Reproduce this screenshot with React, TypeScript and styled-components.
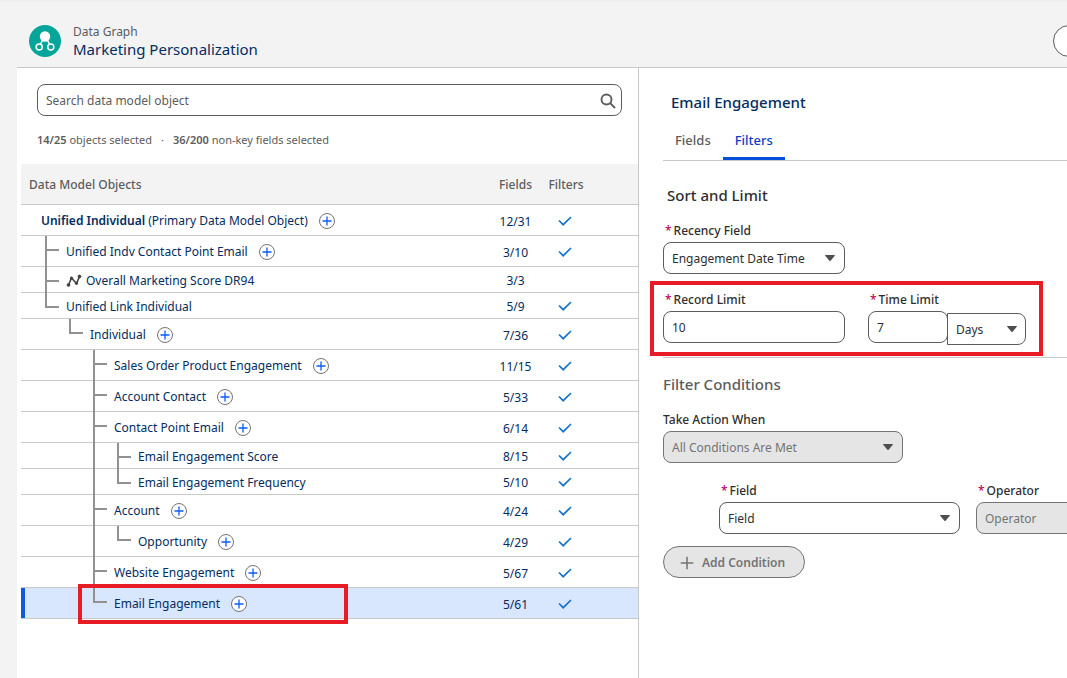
import React, { useState } from "react";
import styled, { createGlobalStyle, css } from "styled-components";

const color = {
  page: "#f3f3f3",
  line: "#c9c9c9",
  text: "#2e2e2e",
  muted: "#5c5c5c",
  navy: "#032d60",
  brand: "#0250d9",
  disabled: "#e5e5e5",
  mark: "#e81c24",
};

const GlobalStyle = createGlobalStyle`
  *, *::before, *::after { box-sizing: border-box; }
  html, body { height: 100%; }
  body {
    margin: 0;
    overflow: hidden;
    background: ${color.page};
    color: ${color.text};
    font: 12px/16px "Noto Sans", "Open Sans", sans-serif;
  }
  #root { height: 100%; }
  h1, h2, h3, p { margin: 0; }
  button, input, select { font: inherit; color: inherit; margin: 0; }
`;

const Shell = styled.div`
  min-height: 100%;
  display: flex;
  flex-direction: column;
  padding-left: 17px;
  box-shadow: inset 0 2px 0 #eeeeee;
`;

const Header = styled.header`
  display: flex;
  align-items: center;
  gap: 12px;
  padding: 23px 0 8px 12px;
  border-bottom: 1px solid ${color.line};
  overflow: hidden;
`;

const Heading = styled.div`
  flex: 1;
  padding-bottom: 2px;
`;

const Eyebrow = styled.p`
  font-size: 12px;
  line-height: 18px;
  color: ${color.muted};
`;

const PageTitle = styled.h1`
  font-size: 15px;
  line-height: 16px;
  font-weight: 400;
  color: ${color.navy};
`;

const HeaderButton = styled.button`
  flex: none;
  width: 80px;
  height: 32px;
  margin-right: -66px;
  border: 1px solid ${color.muted};
  border-radius: 16px;
  background: #fff;
`;

const Columns = styled.main`
  flex: 1;
  display: grid;
  grid-template-columns: minmax(0, 622fr) minmax(0, 428fr);
  background: #fff;
`;

const ObjectsPanel = styled.section`
  padding-top: 16px;
  border-right: 1px solid ${color.line};
`;

const SearchBox = styled.label`
  display: flex;
  align-items: center;
  height: 32px;
  margin: 0 16px 0 20px;
  padding: 1px 5px 0 8px;
  border: 1px solid ${color.muted};
  border-radius: 8px;
`;

const SearchInput = styled.input`
  flex: 1;
  min-width: 0;
  padding: 0;
  border: 0;
  outline: 0;
  background: none;
  &::placeholder { color: ${color.muted}; opacity: 1; }
`;

const Stats = styled.p`
  display: flex;
  gap: 9px;
  margin: 14px 20px;
  font-size: 11px;
  line-height: 20px;
  color: ${color.muted};
  b { font-weight: 600; }
`;

const Table = styled.table`
  width: calc(100% - 4px);
  margin-left: 4px;
  border-spacing: 0;
  table-layout: fixed;
`;

const HeadCell = styled.th<{ $kind: "name" | "fields" | "filters" }>`
  height: 41px;
  padding: 2px 0 0;
  border-bottom: 1px solid ${color.line};
  background: ${color.page};
  color: ${color.muted};
  font-weight: 500;
  text-align: center;
  ${(p) => p.$kind === "name" && css`padding-left: 8px; text-align: left;`}
  ${(p) => p.$kind === "fields" && css`width: 51px;`}
  ${(p) => p.$kind === "filters" && css`width: 97px; padding-right: 47px;`}
`;

const Row = styled.tr<{ $active?: boolean }>`
  color: ${color.navy};
  background: ${(p) => (p.$active ? "#d8e6fe" : "#fff")};
  & > td { border-bottom: 1px solid ${color.line}; padding: 0; }
  & > td:first-child { box-shadow: ${(p) => (p.$active ? "inset 4px 0 0 #0b5cdc" : "none")}; }
`;

const NumberCell = styled.td`
  text-align: center;
  && { padding-top: 3px; }
`;

const CheckCell = styled.td`
  line-height: 0;
  text-align: center;
  && { padding: 1px 49px 0 0; }
`;

const NameCell = styled.div<{ $tall: boolean; $root: boolean }>`
  position: relative;
  display: flex;
  align-items: stretch;
  height: ${(p) => (p.$tall ? 30 : 25)}px;
  padding-left: ${(p) => (p.$root ? 20 : 24)}px;
  white-space: nowrap;
`;

const NameLine = styled.div`
  display: flex;
  align-items: center;
  padding-top: 2px;
`;

type GuideKind = "none" | "pass" | "tee" | "end";

const Guide = styled.span<{ $kind: GuideKind; $last: boolean }>`
  position: relative;
  flex: none;
  width: ${(p) => (p.$last ? 21 : 24)}px;
  &::before {
    content: "";
    position: absolute;
    left: 0;
    top: 0;
    display: ${(p) => (p.$kind === "none" ? "none" : "block")};
    width: 2px;
    ${(p) => (p.$kind === "end" ? "height: 15px" : "bottom: -1px")};
    background: #919191;
  }
  &::after {
    content: "";
    position: absolute;
    left: 0;
    top: 13px;
    display: ${(p) => (p.$kind === "tee" || p.$kind === "end" ? "block" : "none")};
    width: 14px;
    height: 2px;
    background: #919191;
  }
`;

const ObjectName = styled.span`
  line-height: 18px;
  b { font-weight: 600; }
`;

const MetricIcon = styled.svg`
  flex: none;
  margin-right: 4px;
`;

const AddButton = styled.button`
  flex: none;
  display: grid;
  place-items: center;
  width: 16px;
  height: 16px;
  margin-left: 11px;
  padding: 0;
  border: 1px solid #747474;
  border-radius: 50%;
  background: #fff;
`;

const Callout = styled.span<{ $top: number; $left: number; $width: number; $height: number }>`
  position: absolute;
  z-index: 1;
  top: ${(p) => p.$top}px;
  left: ${(p) => p.$left}px;
  width: ${(p) => p.$width}px;
  height: ${(p) => p.$height}px;
  border: 4px solid ${color.mark};
  pointer-events: none;
`;

const DetailPanel = styled.section`
  padding: 24px 0 0 24px;
  overflow: hidden;
`;

const DetailTitle = styled.h2`
  padding-left: 8px;
  font-size: 15px;
  line-height: 20px;
  font-weight: 500;
  color: ${color.navy};
`;

const Tabs = styled.div`
  display: flex;
  margin-top: 18px;
  border-bottom: 1px solid ${color.line};
`;

const Tab = styled.button<{ $active: boolean }>`
  height: 30px;
  padding: 0 12px 8px;
  border: 0;
  border-bottom: 3px solid ${(p) => (p.$active ? color.brand : "transparent")};
  background: none;
  font-size: 13px;
  line-height: 18px;
  font-weight: 500;
  color: ${(p) => (p.$active ? "#0b3fc4" : color.muted)};
`;

const SectionTitle = styled.h3<{ $muted?: boolean }>`
  margin-top: ${(p) => (p.$muted ? 16 : 24)}px;
  padding-left: ${(p) => (p.$muted ? 0 : 4)}px;
  font-size: 15px;
  line-height: 20px;
  font-weight: 500;
  color: ${(p) => (p.$muted ? color.muted : color.text)};
`;

const FieldRow = styled.div<{ $indent?: boolean; $gap?: number; $top: number }>`
  position: relative;
  display: flex;
  align-items: flex-start;
  gap: ${(p) => p.$gap ?? 0}px;
  margin-top: ${(p) => p.$top}px;
  padding-left: ${(p) => (p.$indent ? 56 : 0)}px;
`;

const Field = styled.div`
  flex: none;
  display: flex;
  flex-direction: column;
  gap: 2px;
`;

const Label = styled.label<{ $required?: boolean }>`
  line-height: 18px;
  font-weight: 500;
  ${(p) =>
    p.$required &&
    css`
      padding-left: 2px;
      &::before { content: "*"; margin-right: 2px; color: #ba0554; }
    `}
`;

const control = css`
  height: 32px;
  border: 1px solid ${color.muted};
  border-radius: 8px;
  background: #fff;
`;

const TextInput = styled.input<{ $width: number }>`
  ${control}
  width: ${(p) => p.$width}px;
  padding: 0 8px;
`;

const SelectBox = styled.span<{ $width: number; $joined?: boolean }>`
  display: grid;
  align-items: center;
  width: ${(p) => p.$width}px;
  ${(p) => p.$joined && css`margin: 2px 0 0 -1px;`}
  & > * { grid-area: 1 / 1; }
  & > svg { justify-self: end; margin-right: ${(p) => (p.$joined ? 8 : 9)}px; pointer-events: none; }
`;

const NativeSelect = styled.select<{ $joined?: boolean }>`
  ${control}
  appearance: none;
  width: 100%;
  padding: 2px 24px 0 8px;
  ${(p) => p.$joined && css`border-radius: 0 8px 8px 0;`}
  &:disabled {
    opacity: 1;
    background: ${color.disabled};
    border-color: #747474;
    color: #747474;
  }
`;

const Inline = styled.div`
  display: flex;
  align-items: flex-start;
`;

const Divider = styled.hr`
  height: 1px;
  margin: 12px 0 0;
  border: 0;
  background: ${color.line};
`;

const ConditionButton = styled.button`
  display: flex;
  align-items: center;
  gap: 8px;
  height: 32px;
  min-width: 142px;
  margin-top: 12px;
  padding: 2px 16px 0;
  border: 1px solid #747474;
  border-radius: 16px;
  background: ${color.disabled};
  color: #747474;
  font-weight: 600;
`;

interface DataObject {
  name: string;
  note?: string;
  fields: string;
  guides: GuideKind[];
  add?: boolean;
  metric?: boolean;
  filtered?: boolean;
}

const objects: DataObject[] = [
  { name: "Unified Individual", note: "(Primary Data Model Object)", fields: "12/31", guides: [], add: true, filtered: true },
  { name: "Unified Indv Contact Point Email", fields: "3/10", guides: ["tee"], add: true, filtered: true },
  { name: "Overall Marketing Score DR94", fields: "3/3", guides: ["tee"], metric: true },
  { name: "Unified Link Individual", fields: "5/9", guides: ["end"], filtered: true },
  { name: "Individual", fields: "7/36", guides: ["none", "end"], add: true, filtered: true },
  { name: "Sales Order Product Engagement", fields: "11/15", guides: ["none", "none", "tee"], add: true, filtered: true },
  { name: "Account Contact", fields: "5/33", guides: ["none", "none", "tee"], add: true, filtered: true },
  { name: "Contact Point Email", fields: "6/14", guides: ["none", "none", "tee"], add: true, filtered: true },
  { name: "Email Engagement Score", fields: "8/15", guides: ["none", "none", "pass", "tee"], filtered: true },
  { name: "Email Engagement Frequency", fields: "5/10", guides: ["none", "none", "pass", "end"], filtered: true },
  { name: "Account", fields: "4/24", guides: ["none", "none", "tee"], add: true, filtered: true },
  { name: "Opportunity", fields: "4/29", guides: ["none", "none", "pass", "end"], add: true, filtered: true },
  { name: "Website Engagement", fields: "5/67", guides: ["none", "none", "tee"], add: true, filtered: true },
  { name: "Email Engagement", fields: "5/61", guides: ["none", "none", "end"], add: true, filtered: true },
];

const GraphIcon = () => (
  <svg width="32" height="32" viewBox="0 0 32 32" aria-hidden="true">
    <circle cx="16" cy="16" r="16" fill="#06a59a" />
    <g fill="none" stroke="#fff" strokeWidth="1.5">
      <path d="M14 14.5 11.5 19M18 14.5 20.5 19" />
      <circle cx="10.2" cy="22" r="3" />
      <circle cx="21.8" cy="22" r="3" />
    </g>
    <circle cx="16" cy="11.5" r="5.2" fill="#fff" />
  </svg>
);

const SearchIcon = () => (
  <svg width="16" height="16" viewBox="0 0 16 16" fill="none" stroke="#5c5c5c" strokeWidth="1.9" aria-hidden="true">
    <circle cx="6.5" cy="6.5" r="5" />
    <path d="m10.2 10.2 4.8 4.8" />
  </svg>
);

const CheckIcon = () => (
  <svg width="14" height="12" viewBox="0 0 14 12" fill="none" stroke="#1675c8" strokeWidth="1.7" aria-hidden="true">
    <path d="M1 5.5 5.2 9.7 13 2" />
  </svg>
);

const PlusIcon = ({ size, stroke, weight }: { size: number; stroke: string; weight: number }) => (
  <svg width={size} height={size} viewBox="0 0 10 10" stroke={stroke} strokeWidth={weight} aria-hidden="true">
    <path d="M5 .5v9M.5 5h9" />
  </svg>
);

const Arrow = () => (
  <svg width="12" height="8" viewBox="0 0 12 8" fill="#514f4d" aria-hidden="true">
    <path d="M1.6 1h8.8q.9 0 .4.8L6.6 6.8q-.6.6-1.2 0L1.2 1.8Q.7 1 1.6 1Z" />
  </svg>
);

interface SelectProps {
  id: string;
  width: number;
  value: string;
  disabled?: boolean;
  joined?: boolean;
  label?: string;
}

const Select = ({ id, width, value, disabled, joined, label }: SelectProps) => (
  <SelectBox $width={width} $joined={joined}>
    <NativeSelect id={id} disabled={disabled} $joined={joined} aria-label={label}>
      <option>{value}</option>
    </NativeSelect>
    <Arrow />
  </SelectBox>
);

export default function App() {
  const [tab, setTab] = useState("Filters");
  const [selected, setSelected] = useState(objects.length - 1);

  return (
    <>
      <GlobalStyle />
      <Shell>
        <Header>
          <GraphIcon />
          <Heading>
            <Eyebrow>Data Graph</Eyebrow>
            <PageTitle>Marketing Personalization</PageTitle>
          </Heading>
          <HeaderButton type="button" aria-label="Cancel" />
        </Header>
        <Columns>
          <ObjectsPanel>
            <SearchBox>
              <SearchInput type="text" aria-label="Search data model object" placeholder="Search data model object" />
              <SearchIcon />
            </SearchBox>
            <Stats>
              <span><b>14/25</b> objects selected</span>
              <span>·</span>
              <span><b>36/200</b> non-key fields selected</span>
            </Stats>
            <Table>
              <thead>
                <tr>
                  <HeadCell $kind="name">Data Model Objects</HeadCell>
                  <HeadCell $kind="fields">Fields</HeadCell>
                  <HeadCell $kind="filters">Filters</HeadCell>
                </tr>
              </thead>
              <tbody>
                {objects.map((o, i) => (
                  <Row key={o.name} $active={i === selected} onClick={() => setSelected(i)}>
                    <td>
                      <NameCell $tall={!!o.add} $root={o.guides.length === 0}>
                        {o.guides.map((g, n) => (
                          <Guide key={n} $kind={g} $last={n === o.guides.length - 1} />
                        ))}
                        <NameLine>
                          {o.metric && (
                            <MetricIcon width="16" height="14" viewBox="0 0 16 14" fill="#444" stroke="#444" aria-hidden="true">
                              <path d="M2.5 11 5.5 4 10.5 9.5 13.5 2.5" fill="none" strokeWidth="1.6" />
                              <circle cx="2.5" cy="11" r="1.4" />
                              <circle cx="5.5" cy="4.2" r="1.2" />
                              <circle cx="10.5" cy="9.3" r="1.2" />
                              <circle cx="13.5" cy="2.5" r="1.4" />
                            </MetricIcon>
                          )}
                          <ObjectName>
                            {o.note ? (
                              <>
                                <b>{o.name}</b> {o.note}
                              </>
                            ) : (
                              o.name
                            )}
                          </ObjectName>
                          {o.add && (
                            <AddButton type="button" aria-label={`Add object to ${o.name}`}>
                              <PlusIcon size={10} stroke="#0b5cff" weight={1.3} />
                            </AddButton>
                          )}
                        </NameLine>
                        {i === objects.length - 1 && <Callout $top={-4} $left={57} $width={270} $height={40} />}
                      </NameCell>
                    </td>
                    <NumberCell>{o.fields}</NumberCell>
                    <CheckCell>{o.filtered && <CheckIcon />}</CheckCell>
                  </Row>
                ))}
              </tbody>
            </Table>
          </ObjectsPanel>

          <DetailPanel>
            <DetailTitle>Email Engagement</DetailTitle>
            <Tabs role="tablist">
              {["Fields", "Filters"].map((t) => (
                <Tab key={t} type="button" role="tab" aria-selected={t === tab} $active={t === tab} onClick={() => setTab(t)}>
                  {t}
                </Tab>
              ))}
            </Tabs>

            <SectionTitle>Sort and Limit</SectionTitle>
            <FieldRow $top={17}>
              <Field>
                <Label htmlFor="recency" $required>Recency Field</Label>
                <Select id="recency" width={182} value="Engagement Date Time" />
              </Field>
            </FieldRow>
            <FieldRow $top={17} $gap={23}>
              <Field>
                <Label htmlFor="records" $required>Record Limit</Label>
                <TextInput id="records" type="text" $width={182} defaultValue="10" />
              </Field>
              <Field>
                <Label htmlFor="time" $required>Time Limit</Label>
                <Inline>
                  <TextInput id="time" type="text" $width={80} defaultValue="7" />
                  <Select id="unit" width={79} value="Days" joined label="Time unit" />
                </Inline>
              </Field>
              <Callout $top={-10} $left={-13} $width={393} $height={75} />
            </FieldRow>
            <Divider />

            <SectionTitle $muted>Filter Conditions</SectionTitle>
            <FieldRow $top={17}>
              <Field>
                <Label htmlFor="action">Take Action When</Label>
                <Select id="action" width={240} value="All Conditions Are Met" disabled />
              </Field>
            </FieldRow>
            <FieldRow $top={19} $gap={16} $indent>
              <Field>
                <Label htmlFor="field" $required>Field</Label>
                <Select id="field" width={241} value="Field" />
              </Field>
              <Field>
                <Label htmlFor="operator" $required>Operator</Label>
                <Select id="operator" width={160} value="Operator" disabled />
              </Field>
            </FieldRow>
            <ConditionButton type="button" disabled>
              <PlusIcon size={14} stroke="#747474" weight={1.1} />
              Add Condition
            </ConditionButton>
          </DetailPanel>
        </Columns>
      </Shell>
    </>
  );
}
